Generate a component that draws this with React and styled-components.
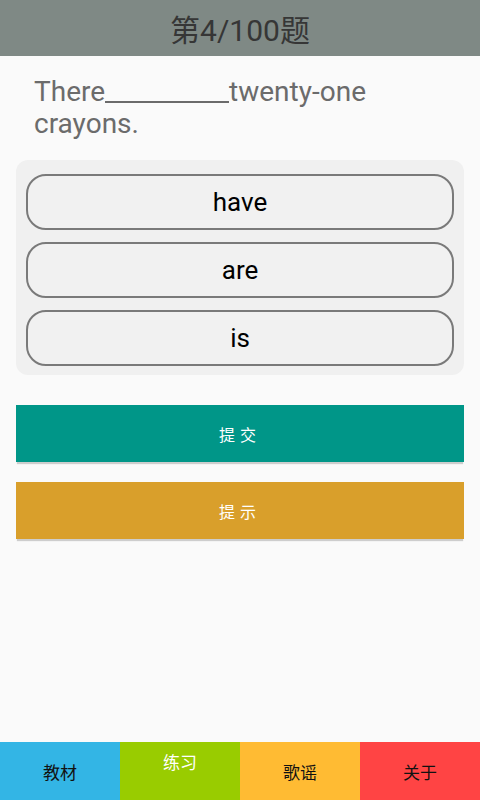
import React from "react";
import styled, { createGlobalStyle } from "styled-components";

const GlobalStyle = createGlobalStyle`
  html, body {
    margin: 0;
    padding: 0;
    height: 100%;
  }
  body {
    font-family: Roboto, "Noto Sans CJK SC", sans-serif;
  }
  #root {
    height: 100%;
  }
`;

const Screen = styled.div`
  display: flex;
  flex-direction: column;
  width: 480px;
  height: 800px;
  background: #fafafa;
`;

const TitleBar = styled.header`
  height: 56px;
  flex-shrink: 0;
  display: flex;
  align-items: center;
  justify-content: center;
  background: #7f8985;
  color: #363636;
  font-size: 30px;
`;

const Body = styled.section`
  flex: 1;
  display: flex;
  flex-direction: column;
  padding: 0 16px;
`;

const Question = styled.p`
  margin: 20px 0 0;
  padding: 0 18px;
  color: #6b6b6b;
  font-size: 28px;
  line-height: 32px;
`;

const Blank = styled.span`
  display: inline-block;
  width: 124px;
  height: 24px;
  border-bottom: 2px solid #6b6b6b;
  vertical-align: baseline;
  margin-bottom: -2px;
`;

const OptionGroup = styled.div`
  margin-top: 20px;
  padding: 14px 10px 9px;
  display: flex;
  flex-direction: column;
  gap: 12px;
  background: #f0f0f0;
  border-radius: 12px;
`;

const Option = styled.button`
  height: 56px;
  display: flex;
  align-items: center;
  justify-content: center;
  background: #f1f1f1;
  border: 2px solid #7a7a7a;
  border-radius: 20px;
  color: #000;
  font-family: Roboto, sans-serif;
  font-size: 26px;
`;

const ActionButton = styled.button`
  margin-top: ${(p) => p.$top}px;
  height: 57px;
  border: none;
  background: ${(p) => p.$bg};
  color: #fff;
  font-family: "Noto Sans CJK SC", sans-serif;
  font-size: 16px;
  letter-spacing: 5px;
  box-shadow: 0 3px 1px -1px rgba(0, 0, 0, 0.18);
`;

const TabBar = styled.nav`
  height: 58px;
  flex-shrink: 0;
  display: grid;
  grid-template-columns: repeat(4, 1fr);
`;

const Tab = styled.div`
  display: flex;
  justify-content: center;
  align-items: ${(p) => (p.$active ? "flex-start" : "center")};
  padding-top: ${(p) => (p.$active ? "7px" : "0")};
  background: ${(p) => p.$bg};
  color: ${(p) => (p.$active ? "#fff" : "#111")};
  font-family: "Noto Sans CJK SC", sans-serif;
  font-size: 17px;
`;

const tabs = [
  { label: "教材", bg: "#33b5e5" },
  { label: "练习", bg: "#99cc00", active: true },
  { label: "歌谣", bg: "#ffbb33" },
  { label: "关于", bg: "#ff4444" },
];

export default function App() {
  return (
    <>
      <GlobalStyle />
      <Screen>
        <TitleBar>第4/100题</TitleBar>
        <Body>
          <Question>
            There<Blank />twenty-one crayons.
          </Question>
          <OptionGroup>
            <Option>have</Option>
            <Option>are</Option>
            <Option>is</Option>
          </OptionGroup>
          <ActionButton $top={30} $bg="#009688">提交</ActionButton>
          <ActionButton $top={20} $bg="#d99f2b">提示</ActionButton>
        </Body>
        <TabBar>
          {tabs.map((t) => (
            <Tab key={t.label} $bg={t.bg} $active={t.active}>
              {t.label}
            </Tab>
          ))}
        </TabBar>
      </Screen>
    </>
  );
}
